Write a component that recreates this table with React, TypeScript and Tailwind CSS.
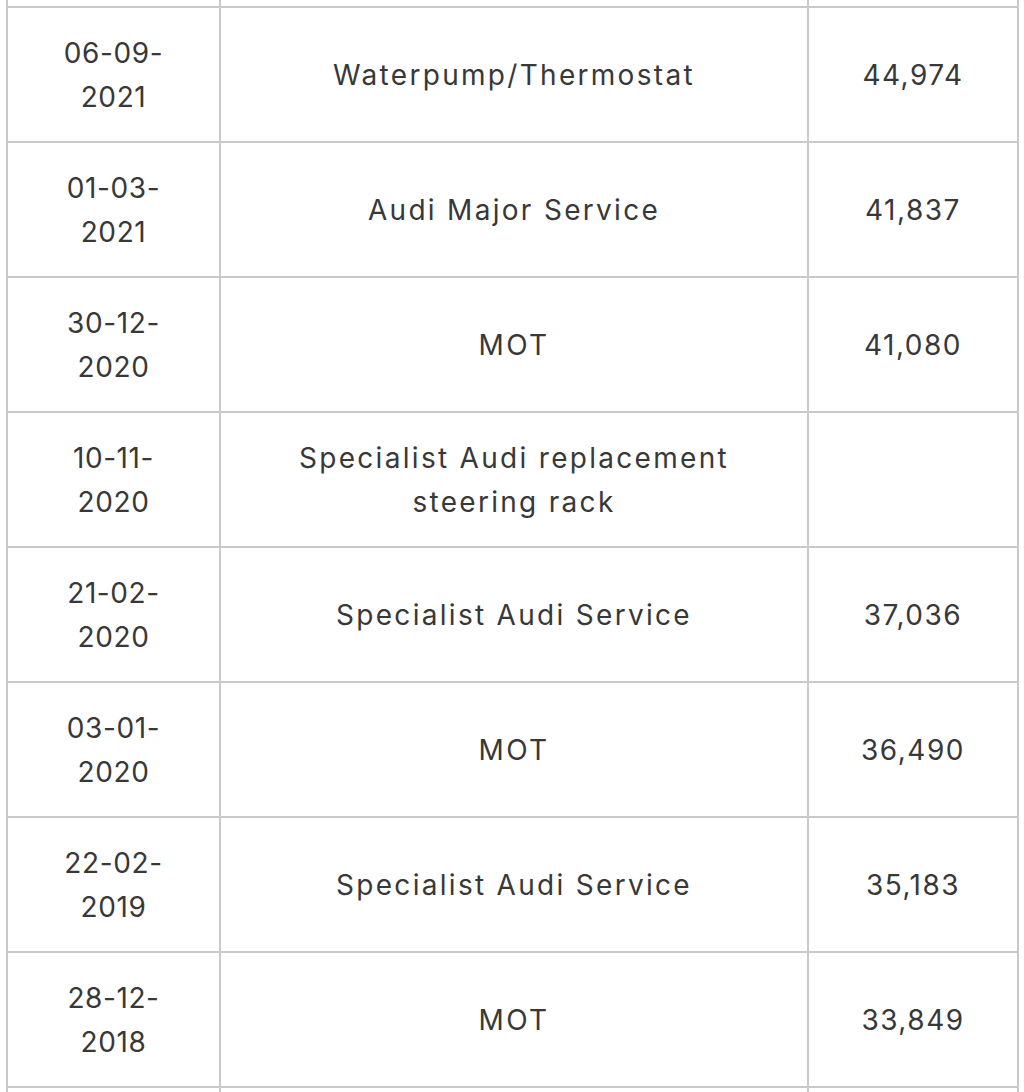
const ROWS = [
  { date: "06-09-2021", job: "Waterpump/Thermostat", miles: "44,974" },
  { date: "01-03-2021", job: "Audi Major Service", miles: "41,837" },
  { date: "30-12-2020", job: "MOT", miles: "41,080" },
  { date: "10-11-2020", job: "Specialist Audi replacement steering rack", miles: "" },
  { date: "21-02-2020", job: "Specialist Audi Service", miles: "37,036" },
  { date: "03-01-2020", job: "MOT", miles: "36,490" },
  { date: "22-02-2019", job: "Specialist Audi Service", miles: "35,183" },
  { date: "28-12-2018", job: "MOT", miles: "33,849" },
];

function splitDate(date: string) {
  return [date.slice(0, 6), date.slice(6)];
}

export default function App() {
  return (
    <div
      className="h-[1092px] w-[1024px] overflow-hidden bg-white text-[#383838]"
      style={{ fontFamily: "Inter, 'Noto Sans', sans-serif" }}
    >
      <table className="ml-[6px] w-[1011px] table-fixed border-collapse text-center text-[28px] leading-[44px]">
        <colgroup>
          <col className="w-[213px]" />
          <col className="w-[588px]" />
          <col className="w-[210px]" />
        </colgroup>
        <tbody>
          <tr>
            <td className="h-[7px] border-2 border-t-0 border-[#c9c9c9] p-0" />
            <td className="h-[7px] border-2 border-t-0 border-[#c9c9c9] p-0" />
            <td className="h-[7px] border-2 border-t-0 border-[#c9c9c9] p-0" />
          </tr>
          {ROWS.map((row) => {
            const [day, year] = splitDate(row.date);
            return (
              <tr key={row.date}>
                <td className="h-[135px] border-2 border-[#c9c9c9] px-4 align-middle tracking-[0.6px]">
                  {day}
                  <br />
                  {year}
                </td>
                <td className="h-[135px] border-2 border-[#c9c9c9] px-[70px] align-middle tracking-[2.3px]">
                  {row.job}
                </td>
                <td className="h-[135px] border-2 border-[#c9c9c9] px-4 align-middle tracking-[1.5px]">
                  {row.miles}
                </td>
              </tr>
            );
          })}
          <tr>
            <td className="h-[135px] border-2 border-[#c9c9c9]" />
            <td className="h-[135px] border-2 border-[#c9c9c9]" />
            <td className="h-[135px] border-2 border-[#c9c9c9]" />
          </tr>
        </tbody>
      </table>
    </div>
  );
}
